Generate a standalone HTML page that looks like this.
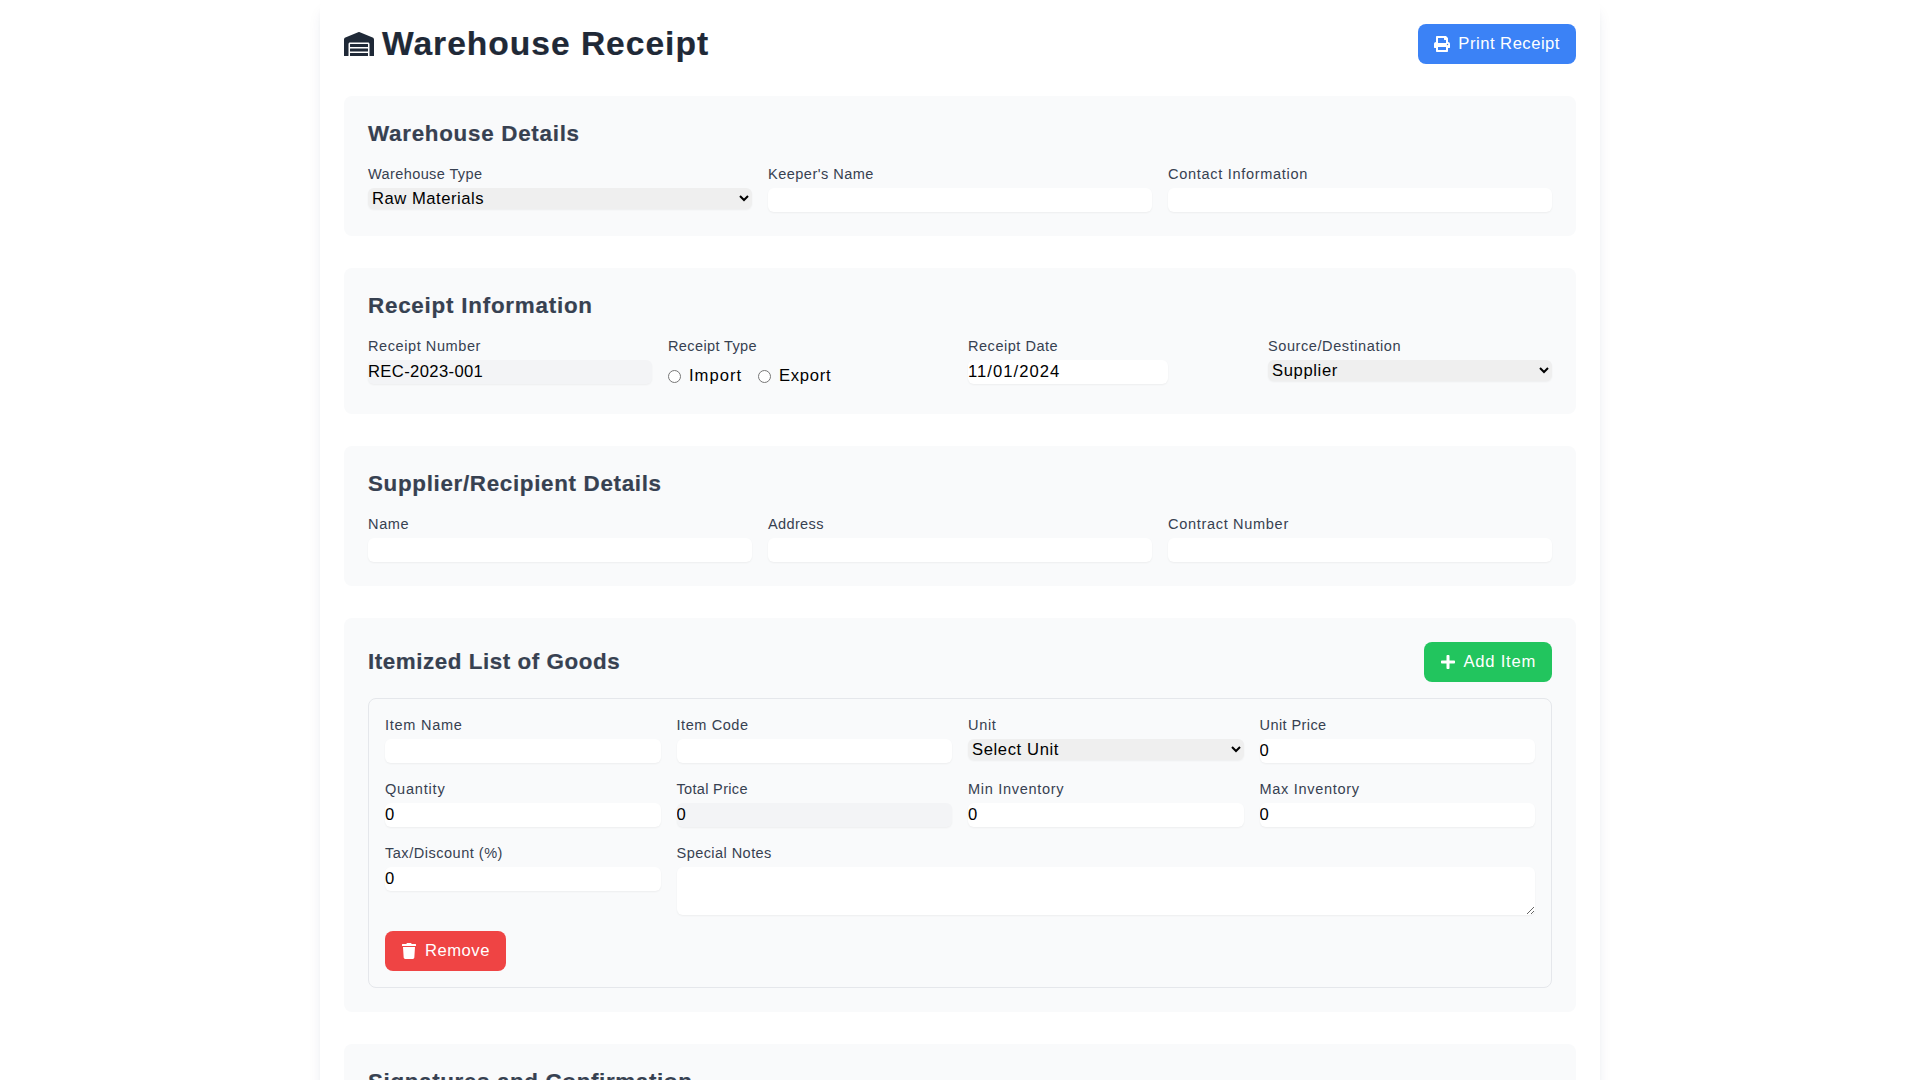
<!DOCTYPE html>
<html lang="en">
<head>
<meta charset="utf-8">
<title>Warehouse Receipt</title>
<style>
*,*::before,*::after{box-sizing:border-box;border-width:0;border-style:solid;border-color:#e5e7eb;}
html,body{margin:0;padding:0;}
body{background:#ffffff;font-family:"Liberation Sans",sans-serif;font-size:16px;line-height:24px;color:#000;overflow:hidden;}
input,select,textarea,button{font-family:inherit;font-size:100%;font-weight:inherit;line-height:inherit;color:inherit;margin:0;padding:0;}
h1,h2,p{margin:0;}
.wrap{max-width:1280px;margin:0 auto;background:#fff;border-radius:8px;padding:24px;min-height:1300px;
  box-shadow:0 10px 15px -3px rgba(30,50,110,.1),0 4px 6px -4px rgba(30,50,110,.1);}
.hdr{display:flex;justify-content:space-between;align-items:center;margin-bottom:32px;}
h1{font-size:30px;line-height:36px;font-weight:700;color:#1f2937;display:flex;align-items:center;}
h1 svg{width:30px;height:24px;margin-right:8px;fill:#1f2937;flex:none;}
.btn{display:flex;align-items:center;height:40px;padding:0 16px;border-radius:8px;color:#fff;font-size:16px;white-space:nowrap;}
.btn svg{width:16px;height:16px;fill:#fff;margin-right:8px;flex:none;}
.blue{background:#3b82f6;}
.green{background:#22c55e;}
.red{background:#ef4444;}
.sec{background:#f9fafb;border-radius:8px;padding:24px;margin-bottom:32px;}
h2{font-size:20px;line-height:28px;font-weight:700;color:#374151;margin-bottom:16px;white-space:nowrap;display:flex;align-items:center;height:28px;}
.g3{display:grid;grid-template-columns:repeat(3,minmax(0,1fr));gap:16px;}
.g4{display:grid;grid-template-columns:repeat(4,minmax(0,1fr));gap:16px;}
.l{display:flex;height:20px;align-items:center;font-size:14px;line-height:20px;color:#374151;white-space:nowrap;}
.f{display:block;width:100%;margin-top:4px;border-radius:6px;background:#fff;box-shadow:0 1px 2px 0 rgba(0,0,0,.05);}
input.f{height:24px;}
select.f{background-color:#efefef;height:21px;}
.ro{background:#f3f4f6 !important;}
.box{border:1px solid #e5e7eb;border-radius:8px;padding:16px;}
.span3{grid-column:span 3 / span 3;}
.radios{margin-top:8px;height:26px;position:relative;}
.radios label{position:absolute;top:0;display:flex;align-items:center;height:24px;}
.radios input{width:13px;height:13px;}
.radios span{margin-left:8px;}
</style>
</head>
<body>
<div class="wrap">
  <div class="hdr">
    <h1><svg viewBox="0 0 640 512"><path d="M504 352H136.4c-4.4 0-8 3.6-8 8l-.1 48c0 4.4 3.6 8 8 8H504c4.4 0 8-3.6 8-8v-48c0-4.4-3.6-8-8-8zm0 96H136.1c-4.4 0-8 3.6-8 8l-.1 48c0 4.4 3.6 8 8 8h368c4.4 0 8-3.6 8-8v-48c0-4.4-3.6-8-8-8zm0-192H136.6c-4.4 0-8 3.6-8 8l-.1 48c0 4.4 3.6 8 8 8H504c4.4 0 8-3.6 8-8v-48c0-4.4-3.6-8-8-8zm106.5-139L338.4 3.7a48.15 48.15 0 0 0-36.9 0L29.5 117C11.7 124.5 0 141.9 0 161.3V504c0 4.4 3.6 8 8 8h80c4.4 0 8-3.6 8-8V256c0-17.6 14.6-32 32.6-32h382.8c18 0 32.6 14.4 32.6 32v248c0 4.4 3.6 8 8 8h80c4.4 0 8-3.6 8-8V161.3c0-19.4-11.7-36.8-29.5-44.3z"/></svg><span class="t" style="font-size:33.6px;letter-spacing:0.982px;-webkit-text-stroke:0.2px currentColor">Warehouse Receipt</span></h1>
    <div class="btn blue"><svg viewBox="0 0 512 512"><path d="M448 192V77.25c0-8.49-3.37-16.62-9.37-22.63L393.37 9.37c-6-6-14.14-9.37-22.63-9.37H96C78.33 0 64 14.33 64 32v160c-35.35 0-64 28.65-64 64v112c0 8.84 7.16 16 16 16h48v96c0 17.67 14.33 32 32 32h320c17.67 0 32-14.33 32-32v-96h48c8.84 0 16-7.16 16-16V256c0-35.35-28.65-64-64-64zm-64 256H128v-96h256v96zm0-224H128V64h192v48c0 8.84 7.16 16 16 16h48v96zm48 72c-13.25 0-24-10.75-24-24 0-13.26 10.75-24 24-24s24 10.74 24 24c0 13.25-10.75 24-24 24z"/></svg><span class="t" style="font-size:16.64px;letter-spacing:0.499px">Print Receipt</span></div>
  </div>

  <div class="sec">
    <h2><span class="t" style="font-size:22.4px;letter-spacing:0.721px;-webkit-text-stroke:0.2px currentColor">Warehouse Details</span></h2>
    <div class="g3">
      <div><label class="l"><span class="t" style="font-size:14.56px;letter-spacing:0.375px">Warehouse Type</span></label><select class="f t" style="font-size:16.64px;letter-spacing:0.519px"><option>Raw Materials</option></select></div>
      <div><label class="l"><span class="t" style="font-size:14.56px;letter-spacing:0.466px">Keeper's Name</span></label><input class="f"></div>
      <div><label class="l"><span class="t" style="font-size:14.56px;letter-spacing:0.685px">Contact Information</span></label><input class="f"></div>
    </div>
  </div>

  <div class="sec">
    <h2><span class="t" style="font-size:22.4px;letter-spacing:0.766px;-webkit-text-stroke:0.2px currentColor">Receipt Information</span></h2>
    <div class="g4">
      <div><label class="l"><span class="t" style="font-size:14.56px;letter-spacing:0.562px">Receipt Number</span></label><input class="f ro t" value="REC-2023-001" readonly style="font-size:16.64px;letter-spacing:0.358px"></div>
      <div><label class="l"><span class="t" style="font-size:14.56px;letter-spacing:0.355px">Receipt Type</span></label>
        <div class="radios">
          <label style="left:0"><input type="radio" name="rt"><span class="t" style="font-size:16.64px;letter-spacing:0.997px">Import</span></label>
          <label style="left:90px"><input type="radio" name="rt"><span class="t" style="font-size:16.64px;letter-spacing:0.719px">Export</span></label>
        </div>
      </div>
      <div><label class="l"><span class="t" style="font-size:14.56px;letter-spacing:0.509px">Receipt Date</span></label><input class="f t" style="font-size:16.64px;letter-spacing:1.023px;width:200px" value="11/01/2024"></div>
      <div><label class="l"><span class="t" style="font-size:14.56px;letter-spacing:0.568px">Source/Destination</span></label><select class="f t" style="font-size:16.64px;letter-spacing:0.615px"><option>Supplier</option></select></div>
    </div>
  </div>

  <div class="sec">
    <h2><span class="t" style="font-size:22.4px;letter-spacing:0.673px;-webkit-text-stroke:0.2px currentColor">Supplier/Recipient Details</span></h2>
    <div class="g3">
      <div><label class="l"><span class="t" style="font-size:14.56px;letter-spacing:0.625px">Name</span></label><input class="f"></div>
      <div><label class="l"><span class="t" style="font-size:14.56px;letter-spacing:0.342px">Address</span></label><input class="f"></div>
      <div><label class="l"><span class="t" style="font-size:14.56px;letter-spacing:0.677px">Contract Number</span></label><input class="f"></div>
    </div>
  </div>

  <div class="sec">
    <div class="hdr" style="margin-bottom:16px">
      <h2 style="margin-bottom:0"><span class="t" style="font-size:22.4px;letter-spacing:0.555px;-webkit-text-stroke:0.2px currentColor">Itemized List of Goods</span></h2>
      <div class="btn green"><svg viewBox="0 0 448 512"><path d="M416 208H272V64c0-17.67-14.33-32-32-32h-32c-17.67 0-32 14.33-32 32v144H32c-17.67 0-32 14.33-32 32v32c0 17.67 14.33 32 32 32h144v144c0 17.67 14.33 32 32 32h32c17.67 0 32-14.33 32-32V304h144c17.67 0 32-14.33 32-32v-32c0-17.67-14.33-32-32-32z"/></svg><span class="t" style="font-size:16.64px;letter-spacing:0.742px">Add Item</span></div>
    </div>
    <div class="box">
      <div class="g4">
        <div><label class="l"><span class="t" style="font-size:14.56px;letter-spacing:0.72px">Item Name</span></label><input class="f"></div>
        <div><label class="l"><span class="t" style="font-size:14.56px;letter-spacing:0.562px">Item Code</span></label><input class="f"></div>
        <div><label class="l"><span class="t" style="font-size:14.56px;letter-spacing:0.656px">Unit</span></label><select class="f t" style="font-size:16.64px;letter-spacing:0.602px"><option>Select Unit</option></select></div>
        <div><label class="l"><span class="t" style="font-size:14.56px;letter-spacing:0.405px">Unit Price</span></label><input class="f t" value="0" style="font-size:16.64px;letter-spacing:0.938px"></div>
        <div><label class="l"><span class="t" style="font-size:14.56px;letter-spacing:0.789px">Quantity</span></label><input class="f t" value="0" style="font-size:16.64px;letter-spacing:0.938px"></div>
        <div><label class="l"><span class="t" style="font-size:14.56px;letter-spacing:0.308px">Total Price</span></label><input class="f ro t" value="0" readonly style="font-size:16.64px;letter-spacing:0.938px"></div>
        <div><label class="l"><span class="t" style="font-size:14.56px;letter-spacing:0.68px">Min Inventory</span></label><input class="f t" value="0" style="font-size:16.64px;letter-spacing:0.938px"></div>
        <div><label class="l"><span class="t" style="font-size:14.56px;letter-spacing:0.685px">Max Inventory</span></label><input class="f t" value="0" style="font-size:16.64px;letter-spacing:0.938px"></div>
        <div><label class="l"><span class="t" style="font-size:14.56px;letter-spacing:0.501px">Tax/Discount (%)</span></label><input class="f t" value="0" style="font-size:16.64px;letter-spacing:0.938px"></div>
        <div class="span3"><label class="l"><span class="t" style="font-size:14.56px;letter-spacing:0.428px">Special Notes</span></label><textarea class="f" rows="2"></textarea></div>
      </div>
      <div style="margin-top:16px;display:flex">
        <div class="btn red"><svg viewBox="0 0 448 512"><path d="M432 32H312l-9.4-18.7A24 24 0 0 0 281.1 0H166.8a23.72 23.72 0 0 0-21.4 13.3L136 32H16A16 16 0 0 0 0 48v32a16 16 0 0 0 16 16h416a16 16 0 0 0 16-16V48a16 16 0 0 0-16-16zM53.2 467a48 48 0 0 0 47.9 45h245.8a48 48 0 0 0 47.9-45L416 128H32z"/></svg><span class="t" style="font-size:16.64px;letter-spacing:0.505px">Remove</span></div>
      </div>
    </div>
  </div>

  <div class="sec">
    <h2><span class="t" style="font-size:22.4px;letter-spacing:0.638px;-webkit-text-stroke:0.2px currentColor">Signatures and Confirmation</span></h2>
  </div>
</div>
</body>
</html>
